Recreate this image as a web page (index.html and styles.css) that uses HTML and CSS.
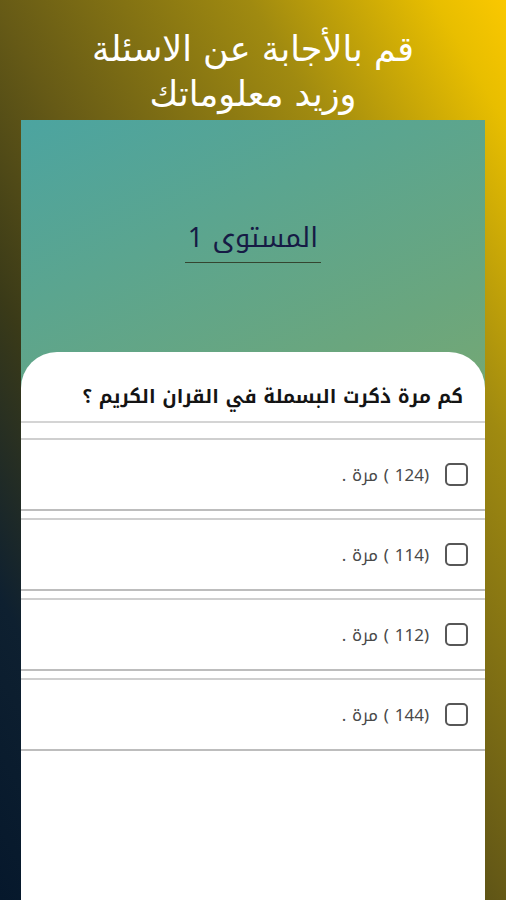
FILE: index.html
```html
<!DOCTYPE html>
<html lang="ar" dir="rtl">
<head>
    <meta charset="UTF-8">
    <title>المستوى 1</title>
    <link rel="stylesheet" href="styles.css">
</head>
<body>
    <header class="promo">
        <h1>
            <span class="promo-line">قم بالأجابة عن الاسئلة</span>
            <span class="promo-line">وزيد معلوماتك</span>
        </h1>
    </header>

    <div class="phone">
        <div class="level-head">
            <h2 class="level-title">المستوى 1</h2>
        </div>

        <div class="quiz-card">
            <div class="question">كم مرة ذكرت البسملة في القران الكريم ؟</div>

            <div class="answers">
                <label class="answer">
                    <span class="box"></span>
                    <span class="answer-text">(124 ) مرة .</span>
                </label>
                <label class="answer">
                    <span class="box"></span>
                    <span class="answer-text">(114 ) مرة .</span>
                </label>
                <label class="answer">
                    <span class="box"></span>
                    <span class="answer-text">(112 ) مرة .</span>
                </label>
                <label class="answer">
                    <span class="box"></span>
                    <span class="answer-text">(144 ) مرة .</span>
                </label>
            </div>
        </div>
    </div>
</body>
</html>
```

FILE: styles.css
```css
html, body {
    margin: 0;
    padding: 0;
    height: 900px;
    overflow: hidden;
}
body {
    font-family: "Noto Kufi Arabic", "Noto Sans Arabic", "DejaVu Sans", sans-serif;
    background: linear-gradient(60deg, #06182c 0%, #0e2030 17%, #3a3a18 34%, #665a16 50%, #a08a10 75%, #e8be00 93%, #fac800 100%);
    display: flex;
    flex-direction: column;
}
.promo {
    height: 120px;
    box-sizing: border-box;
    padding-top: 27px;
    text-align: center;
}
.promo h1 {
    margin: 0;
    color: #ffffff;
    font-family: "DejaVu Sans", sans-serif;
    font-size: 35px;
    font-weight: normal;
}
.promo-line {
    display: block;
    height: 45px;
    line-height: 45px;
}
.phone {
    margin: 0 21px 0 21px;
    flex: 1;
    display: flex;
    flex-direction: column;
    background: linear-gradient(155deg, #4ca4a0 0%, #6aa67e 38%, #86ab64 68%, #a4b04a 100%);
}
.level-head {
    height: 232px;
    display: flex;
    justify-content: center;
    padding-top: 96px;
    box-sizing: border-box;
}
.level-title {
    margin: 0;
    height: 46px;
    font-size: 27px;
    font-weight: normal;
    line-height: 44px;
    color: #161b45;
    border-bottom: 1px solid #344530;
    width: 136px;
    text-align: center;
}
.quiz-card {
    flex: 1;
    background: #ffffff;
    border-radius: 36px 36px 0 0;
}
.question {
    height: 71px;
    box-sizing: border-box;
    padding: 27px 22px 0 20px;
    font-size: 19px;
    font-weight: bold;
    color: #141414;
    border-bottom: 2px solid #d4d4d4;
}
.answers {
    display: flex;
    flex-direction: column;
    gap: 7px;
    margin-top: 15px;
}
.answer {
    height: 73px;
    box-sizing: border-box;
    display: flex;
    align-items: center;
    gap: 16px;
    padding-right: 17px;
    border-top: 2px solid #cfcfcf;
    border-bottom: 2px solid #bdbdbd;
}
.box {
    width: 19px;
    height: 19px;
    border: 2px solid #575757;
    border-radius: 5px;
}
.answer-text {
    font-size: 17px;
    color: #4a4a4a;
}
```
